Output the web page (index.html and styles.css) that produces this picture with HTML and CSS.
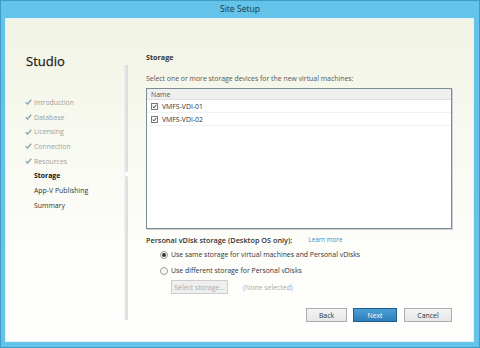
FILE: index.html
```html
<!DOCTYPE html>
<html>
<head>
<meta charset="utf-8">
<title>Site Setup</title>
<link rel="stylesheet" href="styles.css">
</head>
<body>
<div class="window">
  <div class="titlebar">Site Setup</div>
  <div class="client">
    <aside class="sidebar">
      <div class="brand">Studio</div>
      <ul class="steps">
        <li class="step done"><svg class="tick" viewBox="0 0 8 7"><path d="M0.8 3.8 L2.9 5.8 L7.2 0.9" fill="none" stroke="currentColor" stroke-width="1.5"/></svg>Introduction</li>
        <li class="step done"><svg class="tick" viewBox="0 0 8 7"><path d="M0.8 3.8 L2.9 5.8 L7.2 0.9" fill="none" stroke="currentColor" stroke-width="1.5"/></svg>Database</li>
        <li class="step done"><svg class="tick" viewBox="0 0 8 7"><path d="M0.8 3.8 L2.9 5.8 L7.2 0.9" fill="none" stroke="currentColor" stroke-width="1.5"/></svg>Licensing</li>
        <li class="step done"><svg class="tick" viewBox="0 0 8 7"><path d="M0.8 3.8 L2.9 5.8 L7.2 0.9" fill="none" stroke="currentColor" stroke-width="1.5"/></svg>Connection</li>
        <li class="step done"><svg class="tick" viewBox="0 0 8 7"><path d="M0.8 3.8 L2.9 5.8 L7.2 0.9" fill="none" stroke="currentColor" stroke-width="1.5"/></svg>Resources</li>
        <li class="step current"><span class="tick"></span>Storage</li>
        <li class="step"><span class="tick"></span>App-V Publishing</li>
        <li class="step"><span class="tick"></span>Summary</li>
      </ul>
    </aside>
    <div class="divider"><span class="notch"></span></div>
    <main class="content">
      <div class="heading">Storage</div>
      <div class="desc">Select one or more storage devices for the new virtual machines:</div>
      <div class="listbox">
        <div class="list-header">Name</div>
        <div class="list-row"><span class="cb"><svg viewBox="0 0 7 7"><path d="M1 3.6 L2.8 5.4 L6 1.2" fill="none" stroke="#222" stroke-width="1.3"/></svg></span>VMFS-VDI-01</div>
        <div class="list-row"><span class="cb"><svg viewBox="0 0 7 7"><path d="M1 3.6 L2.8 5.4 L6 1.2" fill="none" stroke="#222" stroke-width="1.3"/></svg></span>VMFS-VDI-02</div>
      </div>
      <div class="pvd">
        <span class="pvd-label">Personal vDisk storage (Desktop OS only):</span>
        <span class="link">Learn more</span>
      </div>
      <div class="radio-row"><span class="radio checked"></span>Use same storage for virtual machines and Personal vDisks</div>
      <div class="radio-row second"><span class="radio"></span>Use different storage for Personal vDisks</div>
      <div class="select-row">
        <span class="btn disabled">Select storage...</span>
        <span class="none">(None selected)</span>
      </div>
      <div class="actions">
        <span class="btn back">Back</span>
        <span class="btn primary">Next</span>
        <span class="btn cancel">Cancel</span>
      </div>
    </main>
  </div>
</div>
</body>
</html>
```

FILE: styles.css
```css
* { box-sizing: border-box; }
html, body { margin: 0; padding: 0; }
body {
  width: 480px;
  height: 348px;
  overflow: hidden;
  font-family: "Open Sans", "Noto Sans", sans-serif;
  color: #333;
}
.window {
  width: 480px;
  height: 348px;
  background: #63c3e9;
  border: 1px solid #3f9dc4;
  display: flex;
  flex-direction: column;
}
.titlebar {
  height: 17px;
  line-height: 17px;
  text-align: center;
  font-size: 8.6px;
  color: #1c3646;
}
.client {
  flex: 1;
  margin: 0 5px 5px 4px;
  display: flex;
  background: linear-gradient(to bottom, #f1f3e4 0%, #f8f9f0 35%, #fdfdfa 70%, #fefefc 100%);
  border: 1px solid #e4f3f8;
}
.sidebar {
  width: 118px;
  padding: 34px 0 0 19px;
}
.brand {
  font-size: 13px;
  line-height: 16px;
  font-weight: 400;
  color: #222;
  margin-left: 1px;
  -webkit-text-stroke: 0.25px #222;
}
.steps {
  list-style: none;
  margin: 26px 0 0;
  padding: 0;
}
.step {
  display: flex;
  align-items: center;
  height: 14.7px;
  font-size: 6.9px;
  color: #333;
}
.step.done { color: #9a9fa2; }
.step.current { font-weight: 700; color: #111; }
.tick {
  width: 7px;
  height: 6px;
  margin-right: 2px;
  color: #8aa0ab;
  flex: none;
}
.divider {
  width: 4px;
  margin: 46px 0 21px;
  background: linear-gradient(to right, rgba(230,230,230,0.3), #dfe1e2 55%, #d3d6d8 80%, #ededed);
  position: relative;
}
.notch {
  position: absolute;
  left: 0;
  top: 106px;
  width: 0;
  height: 0;
  border-top: 3px solid transparent;
  border-bottom: 3px solid transparent;
  border-right: 4px solid #ffffff;
}
.content {
  flex: 1;
  padding: 33px 21px 0 18px;
  font-size: 6.9px;
  display: flex;
  flex-direction: column;
}
.heading {
  font-weight: 700;
  font-size: 7.2px;
  line-height: 10px;
  color: #333;
}
.desc {
  margin-top: 12px;
  line-height: 10px;
  color: #555;
}
.listbox {
  margin-top: 4px;
  height: 141px;
  border: 1px solid #7d8c93;
  background: #fff;
  box-shadow: 1px 1px 0 #c9d1d4;
}
.list-header {
  height: 11px;
  line-height: 11px;
  padding-left: 4px;
  background: #efefef;
  border-bottom: 1px solid #e0e0e0;
  color: #555;
}
.list-row {
  height: 13px;
  display: flex;
  align-items: center;
  padding-left: 4px;
  border-bottom: 1px solid #f1f1f1;
  color: #333;
}
.cb {
  width: 7px;
  height: 7px;
  border: 1px solid #7a7a7a;
  background: #fff;
  margin-right: 4px;
  display: flex;
}
.cb svg { width: 100%; height: 100%; }
.pvd {
  margin-top: 6px;
  line-height: 10px;
  display: flex;
  align-items: center;
}
.pvd-label {
  font-weight: 600;
  font-size: 7.3px;
  color: #333;
}
.link {
  margin-left: 16px;
  font-size: 6.3px;
  color: #3f8ec6;
}
.radio-row {
  margin-top: 5px;
  padding-left: 14px;
  line-height: 10px;
  display: flex;
  align-items: center;
  color: #333;
}
.radio-row.second { margin-top: 6px; }
.radio {
  width: 8px;
  height: 8px;
  border-radius: 50%;
  border: 1px solid #9a9a9a;
  background: #fbfbfb;
  margin-right: 3px;
  display: flex;
  align-items: center;
  justify-content: center;
}
.radio.checked::after {
  content: "";
  width: 4px;
  height: 4px;
  border-radius: 50%;
  background: #333;
}
.select-row {
  margin-top: 4px;
  padding-left: 25px;
  display: flex;
  align-items: center;
}
.btn {
  height: 14px;
  display: flex;
  align-items: center;
  justify-content: center;
  border: 1px solid #acacac;
  background: linear-gradient(to bottom, #f4f4f4, #e6e6e6);
  color: #333;
  font-size: 6.9px;
}
.btn.disabled {
  width: 57px;
  border-color: #cdcdcd;
  background: #efefef;
  color: #a8a8a8;
}
.none {
  margin-left: 15px;
  color: #aaa;
}
.actions {
  margin-top: 14px;
  display: flex;
  justify-content: flex-end;
}
.btn.back { width: 41px; }
.btn.primary {
  width: 44px;
  margin-left: 6px;
  background: linear-gradient(to bottom, #4b9fd6, #2f7fb8);
  border-color: #1d5f8e;
  color: #fff;
}
.btn.cancel { width: 48px; margin-left: 7px; }
```
